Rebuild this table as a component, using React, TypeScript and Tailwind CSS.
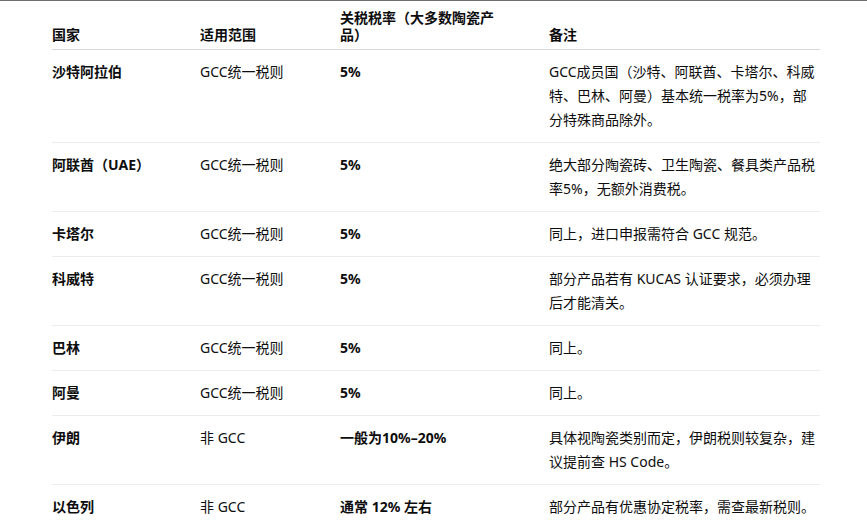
type Row = {
  country: string;
  scope: string;
  rate: string;
  note: string;
};

const rows: Row[] = [
  {
    country: "沙特阿拉伯",
    scope: "GCC统一税则",
    rate: "5%",
    note: "GCC成员国（沙特、阿联酋、卡塔尔、科威特、巴林、阿曼）基本统一税率为5%，部分特殊商品除外。",
  },
  {
    country: "阿联酋（UAE）",
    scope: "GCC统一税则",
    rate: "5%",
    note: "绝大部分陶瓷砖、卫生陶瓷、餐具类产品税率5%，无额外消费税。",
  },
  {
    country: "卡塔尔",
    scope: "GCC统一税则",
    rate: "5%",
    note: "同上，进口申报需符合 GCC 规范。",
  },
  {
    country: "科威特",
    scope: "GCC统一税则",
    rate: "5%",
    note: "部分产品若有 KUCAS 认证要求，必须办理后才能清关。",
  },
  { country: "巴林", scope: "GCC统一税则", rate: "5%", note: "同上。" },
  { country: "阿曼", scope: "GCC统一税则", rate: "5%", note: "同上。" },
  {
    country: "伊朗",
    scope: "非 GCC",
    rate: "一般为10%–20%",
    note: "具体视陶瓷类别而定，伊朗税则较复杂，建议提前查 HS Code。",
  },
  {
    country: "以色列",
    scope: "非 GCC",
    rate: "通常 12% 左右",
    note: "部分产品有优惠协定税率，需查最新税则。",
  },
];

const cols = "grid grid-cols-[148px_140px_209px_271px]";

export default function App() {
  return (
    <div
      className="w-[867px] h-[527px] overflow-hidden bg-white border-t border-[#6f6f6f] text-[14px] text-[#0d0d0d]"
      style={{ fontFamily: '"Noto Sans", "Noto Sans CJK SC", sans-serif' }}
    >
      <div className="ml-[52px] w-[768px]">
        <div
          className={`${cols} items-end pt-[8px] pb-[6px] border-b border-[#d6d6d6] font-bold leading-[17px]`}
        >
          <div>国家</div>
          <div>适用范围</div>
          <div className="w-[160px]">关税税率（大多数陶瓷产品）</div>
          <div>备注</div>
        </div>
        {rows.map((r, i) => (
          <div
            key={r.country}
            className={`${cols} items-start py-[10px] leading-[24px] ${
              i < rows.length - 1 ? "border-b border-[#ececec]" : ""
            }`}
          >
            <div className="font-bold">{r.country}</div>
            <div>{r.scope}</div>
            <div className="font-bold">{r.rate}</div>
            <div>{r.note}</div>
          </div>
        ))}
      </div>
    </div>
  );
}
